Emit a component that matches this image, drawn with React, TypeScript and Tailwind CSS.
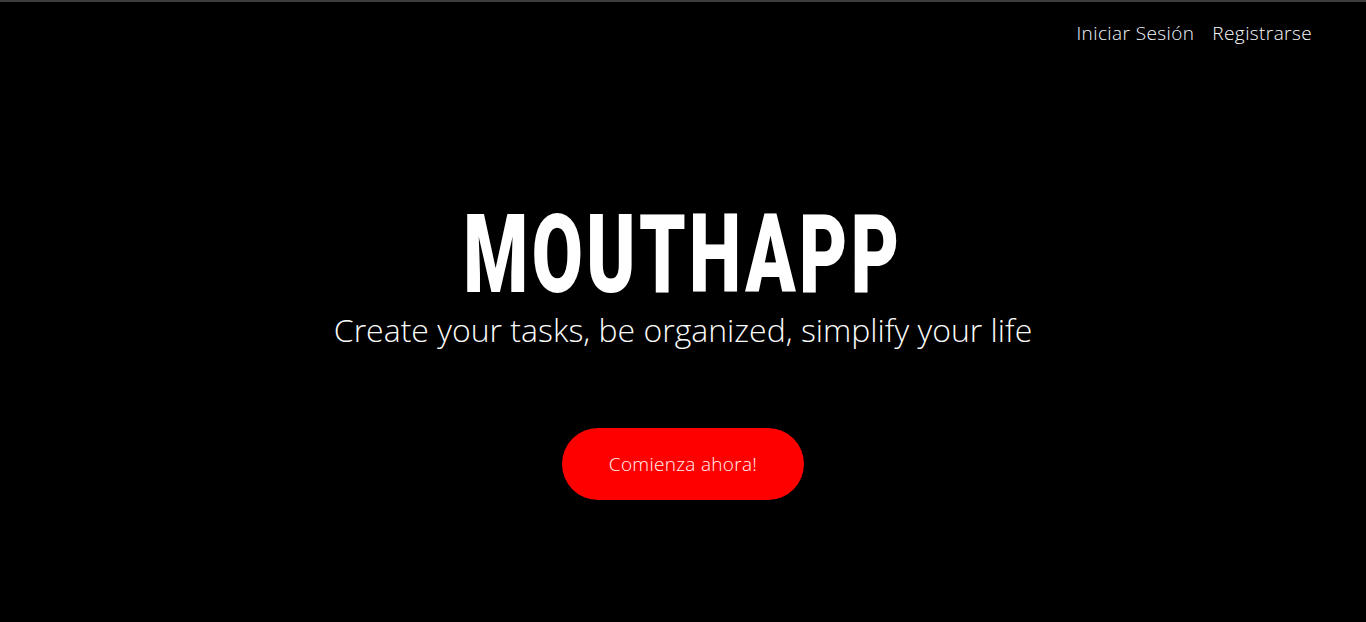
import React from 'react';

const App: React.FC = () => {
    return (
        <div
            className="min-h-screen bg-black border-t-2 border-[#3c3c3c] text-white"
            style={{ fontFamily: '"Open Sans", "Noto Sans", sans-serif' }}
        >
            <nav className="flex justify-end gap-[18px] pt-[18px] pr-[54px] text-[19px] font-light leading-[26px] tracking-[0.4px]">
                <a href="#" className="text-[#f2f7ff]">Iniciar Sesión</a>
                <a href="#" className="text-[#fafafa]">Registrarse</a>
            </nav>

            <main className="flex flex-col items-center mt-[164px]">
                <h1
                    className="font-black text-[109px] leading-[90px] tracking-[5px] scale-x-[0.68] origin-center"
                    style={{ fontFamily: 'Roboto, "Open Sans", sans-serif' }}
                >
                    MOUTHAPP
                </h1>
                <p className="mt-[10px] text-[32px] font-light leading-[40px] text-[#fbfbfb]">
                    Create your tasks, be organized, simplify your life
                </p>
                <button className="mt-[78px] w-[242px] h-[72px] rounded-full bg-[#ff0000] text-[19px] font-light tracking-[0.3px] text-[#fff4f4]">
                    Comienza ahora!
                </button>
            </main>
        </div>
    );
};

export default App;
